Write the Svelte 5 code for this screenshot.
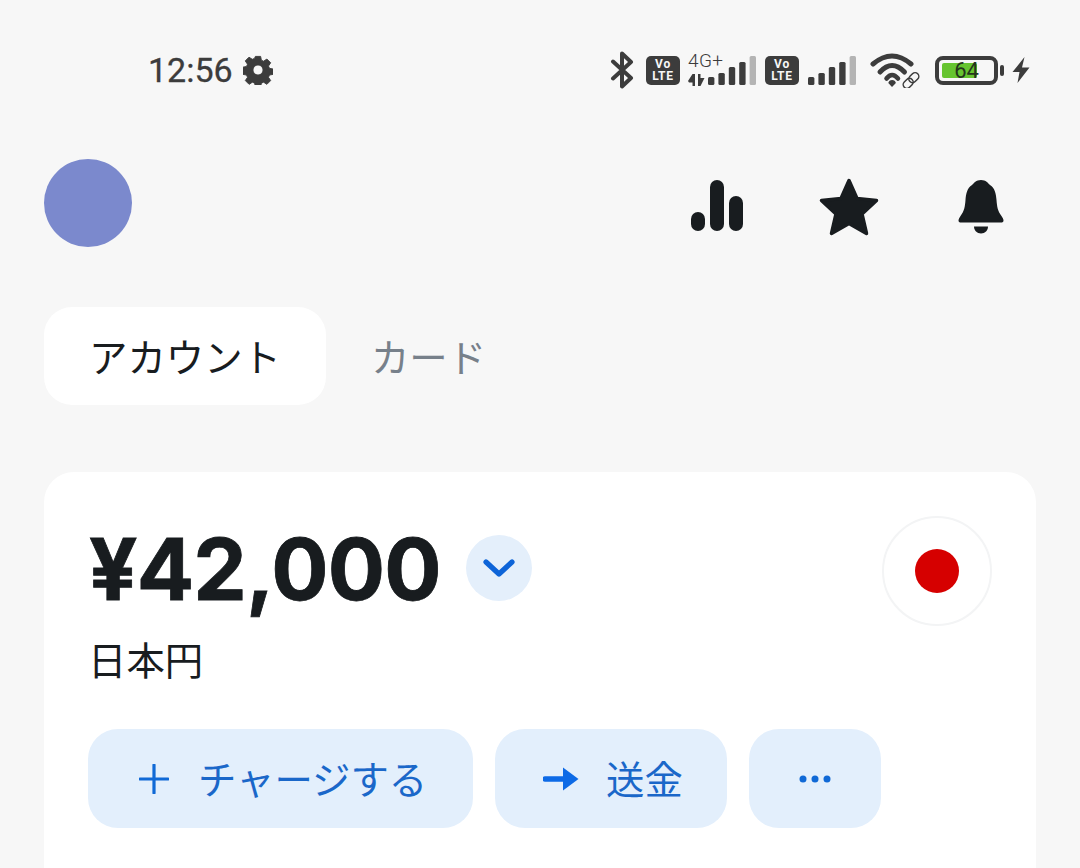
<script>
  const barHeights = [8, 12, 18, 23, 29];
  const bars = barHeights.map((h, i) => ({ x: i * 10.4, h, w: 6.4 }));
</script>

<div class="page">
  <!-- Status bar -->
  <header class="status">
    <div class="status-left">
      <span class="time">12:56</span>
      <svg class="gear" viewBox="0 0 32 32">
        <path fill-rule="evenodd" d="M13.2 1.5h5.6l.8 4.100 2.400 1 3.500-2.300 4 4-2.300 3.500 1 2.400 4 .8v5.600l-4 .8-1 2.400 2.300 3.500-4 4-3.500-2.300-2.400 1-.8 4h-5.600l-.8-4-2.400-1-3.500 2.300-4-4 2.300-3.500-1-2.400-4-.8V13l4-.8 1-2.400L2.400 6.300l4-4 3.500 2.300 2.400-1z M16 10.600a5.400 5.400 0 1 0 0 10.800a5.400 5.400 0 0 0 0-10.800z" stroke="#3c3c3c" stroke-width="1" stroke-linejoin="round"/>
      </svg>
    </div>
    <div class="status-right">
      <svg class="bt" viewBox="0 0 26 38">
        <path d="M3 10.500 21 27 12 35.500V2.500L21 11 3 27.500" fill="none" stroke="#3c3c3c" stroke-width="4" stroke-linejoin="round" stroke-linecap="round"/>
      </svg>
      <span class="volte"><span>Vo</span><span>LTE</span></span>
      <div class="net">
        <span class="net-label">4G+</span>
        <svg class="net-arrows" viewBox="0 0 17 12">
          <path d="M0 7 4.500 0H7v12H4.500V8.500H1zM10 0h2.500v4H16.500L12.500 12H10z" fill="#3c3c3c"/>
        </svg>
      </div>
      <svg class="signal" viewBox="0 0 48 29">
        {#each bars as b, i}
          <rect x={b.x} y={29 - b.h} width={b.w} height={b.h} rx="1.500" fill={i === 4 ? '#b4b4b4' : '#3c3c3c'}/>
        {/each}
      </svg>
      <span class="volte second"><span>Vo</span><span>LTE</span></span>
      <svg class="signal" viewBox="0 0 48 29">
        {#each bars as b, i}
          <rect x={b.x} y={29 - b.h} width={b.w} height={b.h} rx="1.500" fill={i === 4 ? '#b4b4b4' : '#3c3c3c'}/>
        {/each}
      </svg>
      <svg class="wifi" viewBox="0 0 50 36">
        <g fill="none" stroke="#3c3c3c" stroke-width="5" stroke-linecap="round">
          <path d="M3 12Q22 -4 41 12"/>
          <path d="M10 20Q22 7 34.500 20"/>
        </g>
        <path d="M16.500 26.500Q22 19.500 28 26.500" fill="none" stroke="#3c3c3c" stroke-width="4.500" stroke-linecap="round"/>
        <path d="M18.300 31a3.900 3.900 0 0 1 7.600 0L22 35z" fill="#3c3c3c"/>
        <g transform="rotate(-45 41 28.500)" fill="none" stroke="#3c3c3c" stroke-width="1.500">
          <rect x="31.500" y="24.800" width="11" height="7.400" rx="3.700"/>
          <rect x="39.500" y="24.800" width="11" height="7.400" rx="3.700"/>
        </g>
      </svg>
      <div class="battery">
        <div class="battery-body">
          <div class="battery-fill"></div>
          <span class="battery-num">64</span>
        </div>
        <span class="battery-tip"></span>
      </div>
      <svg class="bolt" viewBox="0 0 20 28">
        <path d="M13.500 1 1.500 16h7L6.500 27 18.500 11.500h-7.500z" fill="#3c3c3c"/>
      </svg>
    </div>
  </header>

  <!-- Top nav -->
  <nav class="topnav">
    <div class="avatar"></div>
    <div class="nav-icons">
      <svg class="ic-stats" viewBox="0 0 52 52">
        <rect x="0" y="32" width="14" height="19" rx="7" fill="#181c1f"/>
        <rect x="19" y="0" width="14" height="51" rx="7" fill="#181c1f"/>
        <rect x="38" y="16" width="14" height="35" rx="7" fill="#181c1f"/>
      </svg>
      <svg class="ic-star" viewBox="0 0 60 58">
        <path d="M30 2.500 38 20.500 57.500 22.500 43 36 47.500 55.500 30 45.500 12.500 55.500 17 36 2.500 22.500 22 20.500z" fill="#181c1f" stroke="#181c1f" stroke-width="3.500" stroke-linejoin="round"/>
      </svg>
      <svg class="ic-bell" viewBox="0 0 46 56">
        <path d="M23 1c5 0 7 3 9 5 5 3 6 9 6.500 15 .5 6 1 11 5 16 1 1.500 2 3 2 4.500 0 1.500-1 2-2.500 2H3c-1.500 0-2.500-.5-2.500-2 0-1.500 1-3 2-4.500 4-5 4.500-10 5-16C8 15 9 9 14 6c2-2 4-5 9-5z" fill="#181c1f"/>
        <path d="M16 47.500h14c0 4-3 7-7 7s-7-3-7-7z" fill="#181c1f"/>
      </svg>
    </div>
  </nav>

  <!-- Tabs -->
  <div class="tabs">
    <button class="tab active">アカウント</button>
    <button class="tab">カード</button>
  </div>

  <!-- Balance card -->
  <section class="card">
    <div class="card-head">
      <div class="balance">
        <div class="amount-row">
          <span class="amount">¥42,000</span>
          <span class="chevron-btn">
            <svg viewBox="0 0 32 18" width="32" height="18">
              <path d="M3 3 16 15 29 3" fill="none" stroke="#0d64d8" stroke-width="5.200" stroke-linecap="round" stroke-linejoin="round"/>
            </svg>
          </span>
        </div>
        <div class="currency">日本円</div>
      </div>
      <div class="flag"><span class="sun"></span></div>
    </div>
    <div class="actions">
      <button class="action charge">
        <svg viewBox="0 0 30 30" width="30" height="30">
          <path d="M15 1v28M1 15h28" stroke="#1069d6" stroke-width="3.200" stroke-linecap="round"/>
        </svg>
        <span>チャージする</span>
      </button>
      <button class="action send">
        <svg viewBox="0 0 36 26" width="36" height="26">
          <path d="M2 13h20" stroke="#0d6ae6" stroke-width="5.500" stroke-linecap="round"/>
          <path d="M20 1.500 35.500 13 20 24.500z" fill="#0d6ae6"/>
        </svg>
        <span>送金</span>
      </button>
      <button class="action more" aria-label="more">
        <svg viewBox="0 0 34 10" width="34" height="10">
          <circle cx="5" cy="5" r="3.500" fill="#1069d6"/>
          <circle cx="17" cy="5" r="3.500" fill="#1069d6"/>
          <circle cx="29" cy="5" r="3.500" fill="#1069d6"/>
        </svg>
      </button>
    </div>
  </section>
</div>

<style>
  :global(body) {
    margin: 0;
    background: #f7f7f7;
    overflow: hidden;
  }

  .page {
    height: 868px;
    overflow: hidden;
    padding: 0 44px;
    font-family: Inter, "Noto Sans CJK JP", sans-serif;
    color: #181c1f;
  }

  /* Status bar */
  .status {
    height: 140px;
    display: flex;
    justify-content: space-between;
    align-items: center;
    margin-right: 5px;
    color: #3c3c3c;
  }
  .status-left {
    display: flex;
    align-items: center;
    gap: 10px;
    padding-left: 104px;
  }
  .time {
    font: 400 34px Roboto, sans-serif;
    -webkit-text-stroke: .3px #3c3c3c;
  }
  .gear { width: 30px; height: 30px; fill: #3c3c3c; }
  .status-right {
    display: flex;
    align-items: center;
  }
  .bt { width: 26px; height: 38px; margin-right: 10px; }
  .volte {
    width: 34px;
    height: 29px;
    border-radius: 5px;
    background: #3c3c3c;
    color: #f7f7f7;
    font: 700 12px/12px Roboto, sans-serif;
    letter-spacing: .8px;
    display: flex;
    flex-direction: column;
    align-items: center;
    justify-content: center;
  }
  .volte.second { margin-left: 9px; margin-right: 9px; }
  .net {
    width: 20px;
    margin-left: 8px;
    margin-bottom: 4px;
    display: flex;
    flex-direction: column;
    align-self: flex-end;
    height: 36px;
    justify-content: flex-end;
  }
  .net-label { font: 300 19px/20px Roboto, sans-serif; letter-spacing: .4px; white-space: nowrap; margin-bottom: 3px; }
  .net-arrows { width: 17px; height: 12px; flex: none; }
  .signal { width: 48px; height: 29px; }
  .wifi { width: 50px; height: 36px; margin-left: 14px; margin-right: 15px; }
  .battery { display: flex; align-items: center; gap: 2px; }
  .battery-body {
    position: relative;
    box-sizing: border-box;
    width: 63px;
    height: 29px;
    border: 4px solid #3c3c3c;
    border-radius: 8px;
    padding: 3px;
  }
  .battery-fill { width: 72%; height: 100%; background: #66c430; border-radius: 2px; }
  .battery-num {
    position: absolute;
    inset: 0;
    text-align: center;
    font: 400 22px/22px Roboto, sans-serif;
    color: #24351c;
  }
  .battery-tip { width: 4px; height: 11px; background: #3c3c3c; border-radius: 2px; }
  .bolt { width: 20px; height: 28px; margin-left: 7px; }

  /* Top nav */
  .topnav {
    height: 126px;
    margin-top: 19px;
    display: flex;
    justify-content: space-between;
    align-items: flex-start;
  }
  .avatar {
    width: 88px;
    height: 88px;
    border-radius: 50%;
    background: #7b89cd;
  }
  .nav-icons {
    display: flex;
    align-items: flex-start;
    padding-top: 19px;
    padding-right: 32px;
  }
  .ic-stats { width: 52px; height: 52px; margin-top: 2px; margin-right: 76px; }
  .ic-star { width: 60px; height: 58px; margin-right: 79px; }
  .ic-bell { width: 46px; height: 56px; margin-top: 1px; }

  /* Tabs */
  .tabs { display: flex; margin-top: 22px; }
  .tab {
    height: 98px;
    padding: 0 45px 2px;
    border: none;
    border-radius: 28px;
    background: none;
    font: 400 38.4px "Noto Sans CJK JP", sans-serif;
    color: #77808a;
  }
  .tab.active { background: #fff; color: #181c1f; }

  /* Card */
  .card {
    margin-top: 67px;
    background: #fff;
    border-radius: 30px;
    padding: 44px 44px 0;
    height: 500px;
  }
  .card-head {
    display: flex;
    justify-content: space-between;
    align-items: flex-start;
  }
  .amount-row {
    display: flex;
    align-items: center;
    gap: 25px;
    height: 104px;
  }
  .amount {
    font: 700 85px/104px Inter, sans-serif;
    letter-spacing: -.8px;
    -webkit-text-stroke: .8px #181c1f;
    margin-top: 4px;
    margin-left: 1px;
  }
  .chevron-btn {
    width: 66px;
    height: 66px;
    border-radius: 50%;
    background: #e4effb;
    display: flex;
    align-items: center;
    justify-content: center;
  }
  .currency {
    font: 400 38.4px/54px "Noto Sans CJK JP", sans-serif;
    color: #181c1f;
    margin-top: 11px;
  }
  .flag {
    box-sizing: border-box;
    width: 110px;
    height: 110px;
    border-radius: 50%;
    border: 2px solid #f3f4f5;
    display: flex;
    align-items: center;
    justify-content: center;
  }
  .sun { width: 44px; height: 44px; border-radius: 50%; background: #d60000; }

  .actions { display: flex; gap: 22px; margin-top: 44px; }
  .action {
    height: 99px;
    border: none;
    border-radius: 30px;
    background: #e3effc;
    color: #1a67c9;
    display: flex;
    align-items: center;
    justify-content: center;
    padding: 0;
    font: 400 38.4px "Noto Sans CJK JP", sans-serif;
  }
  .action span { margin-bottom: 4px; }
  .charge { width: 385px; gap: 29px; justify-content: flex-start; padding-left: 51px; }
  .send { width: 232px; gap: 27px; justify-content: flex-start; padding-left: 48px; }
  .more { width: 132px; }
</style>
